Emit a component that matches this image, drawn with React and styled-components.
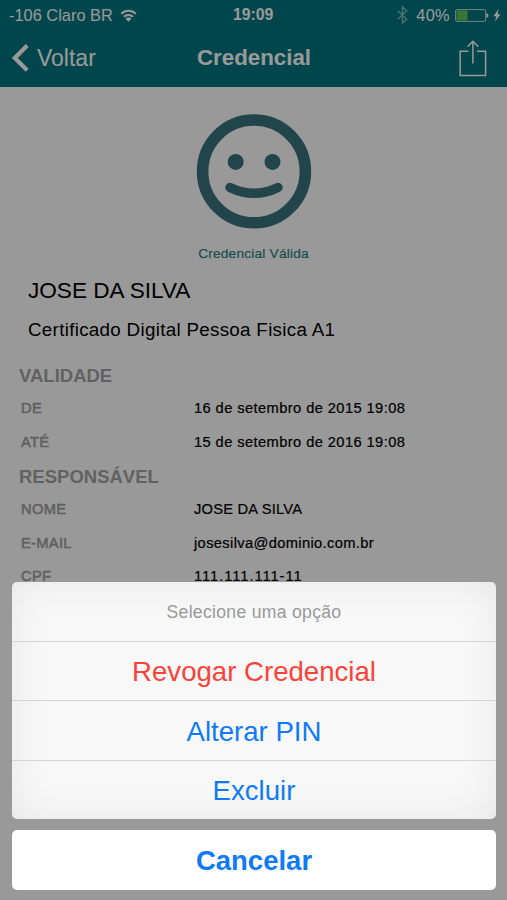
import React from 'react';
import styled, {createGlobalStyle} from 'styled-components';

const validity = [
  {label: 'DE', value: '16 de setembro de 2015 19:08', spacing: 0.4},
  {label: 'ATÉ', value: '15 de setembro de 2016 19:08', spacing: 0.4},
];

const owner = [
  {label: 'NOME', value: 'JOSE DA SILVA', spacing: 0.2},
  {label: 'E-MAIL', value: 'josesilva@dominio.com.br', spacing: 0.35},
  {label: 'CPF', value: '111.111.111-11', spacing: 0.95},
];

function WifiIcon() {
  return (
    <svg width="17" height="13" viewBox="0 0 18 14" fill="none">
      <path d="M1.2 5.2a11 11 0 0 1 15.6 0" stroke="#fff" strokeWidth="2.1" />
      <path d="M4.1 8.3a7.2 7.2 0 0 1 9.8 0" stroke="#fff" strokeWidth="2.1" />
      <path d="M9 13.6 5.7 10.5a4.5 4.5 0 0 1 6.6 0Z" fill="#fff" />
    </svg>
  );
}

function BluetoothIcon() {
  return (
    <svg width="11" height="18" viewBox="0 0 11 18" fill="none">
      <path
        d="M.8 4.8l9 8.4-4.3 3.9V.9l4.3 3.9-9 8.4"
        stroke="#fff"
        strokeOpacity="0.5"
        strokeWidth="1.4"
      />
    </svg>
  );
}

function BatteryIcon() {
  return (
    <svg width="34" height="13" viewBox="0 0 34 13">
      <rect x="0.6" y="0.6" width="30" height="11.8" rx="1.4" fill="none" stroke="#fff" strokeOpacity="0.75" />
      <rect x="1.5" y="1.5" width="11" height="10" fill="#5fc45a" />
      <path d="M31.4 4.2c2.7.5 2.7 4.1 0 4.6Z" fill="#fff" />
    </svg>
  );
}

function BoltIcon() {
  return (
    <svg width="8" height="13" viewBox="0 0 8 13">
      <path d="M5.6 0 .4 7.2h2.9L2 12.6l5.6-7.4H4.7Z" fill="#fff" />
    </svg>
  );
}

function BackIcon() {
  return (
    <svg width="18" height="28" viewBox="0 0 18 28" fill="none">
      <path d="M16.2 1.6 3.8 14l12.4 12.2" stroke="#fff" strokeWidth="4.2" />
    </svg>
  );
}

function ShareIcon() {
  return (
    <svg width="28" height="37" viewBox="0 0 28 37" fill="none" stroke="#fff" strokeWidth="1.5">
      <path d="M9.5 11.2H1.2v24.3h25.4V11.2H17.9" />
      <path d="M13.9 23.6V1.6M8.5 6.7l5.4-5.4 5.4 5.4" />
    </svg>
  );
}

function SmileIcon() {
  return (
    <svg width="116" height="116" viewBox="0 0 116 116">
      <circle cx="58" cy="57.4" r="51.4" fill="none" stroke="#37737d" strokeWidth="11.6" />
      <circle cx="39.7" cy="47.9" r="8" fill="#37737d" />
      <circle cx="76.5" cy="47.9" r="8" fill="#37737d" />
      <path
        d="M34 73.5q24 11.6 48 0"
        fill="none"
        stroke="#37737d"
        strokeWidth="9.4"
        strokeLinecap="round"
      />
    </svg>
  );
}

export default function App() {
  return (
    <Screen>
      <GlobalStyle />
      <Header>
        <StatusBar>
          <StatusSide>
            <span>-106 Claro BR</span>
            <WifiIcon />
          </StatusSide>
          <Clock>19:09</Clock>
          <StatusSide $end>
            <BluetoothIcon />
            <Percent>40%</Percent>
            <BatteryIcon />
            <BoltIcon />
          </StatusSide>
        </StatusBar>
        <NavBar>
          <BackButton>
            <BackIcon />
            Voltar
          </BackButton>
          <Title>Credencial</Title>
          <ShareButton aria-label="Compartilhar">
            <ShareIcon />
          </ShareButton>
        </NavBar>
      </Header>

      <Status>
        <SmileIcon />
        <StatusText>Credencial Válida</StatusText>
      </Status>
      <Name>JOSE DA SILVA</Name>
      <Kind>Certificado Digital Pessoa Fisica A1</Kind>

      <Section title="VALIDADE" rows={validity} />
      <Section title="RESPONSÁVEL" rows={owner} />

      <Backdrop>
        <Sheet>
          <SheetTitle>Selecione uma opção</SheetTitle>
          <SheetButton $danger>Revogar Credencial</SheetButton>
          <SheetButton>Alterar PIN</SheetButton>
          <SheetButton>Excluir</SheetButton>
        </Sheet>
        <CancelButton>Cancelar</CancelButton>
      </Backdrop>
    </Screen>
  );
}

function Section({title, rows}) {
  return (
    <section>
      <SectionTitle>{title}</SectionTitle>
      {rows.map((row) => (
        <Row key={row.label}>
          <Label>{row.label}</Label>
          <Value $spacing={row.spacing}>{row.value}</Value>
        </Row>
      ))}
    </section>
  );
}

const GlobalStyle = createGlobalStyle`
  * {
    box-sizing: border-box;
  }
  body {
    margin: 0;
    font-family: 'Liberation Sans', Arial, sans-serif;
  }
  button {
    font-family: inherit;
    border: none;
    background: none;
    padding: 0;
  }
  svg {
    display: block;
    flex: none;
  }
`;

const Screen = styled.div`
  position: relative;
  width: 507px;
  height: 900px;
  overflow: hidden;
  background-color: #fff;
  color: #000;
  white-space: nowrap;
`;

const Header = styled.header`
  height: 87px;
  background-color: #02767f;
  color: #fff;
`;

const StatusBar = styled.div`
  display: grid;
  grid-template-columns: 224px 1fr 1fr;
  align-items: center;
  height: 29px;
  padding: 1px 6px 0 9px;
  font-size: 16.4px;
`;

const StatusSide = styled.div`
  display: flex;
  align-items: center;
  justify-content: ${(props) => (props.$end ? 'flex-end' : 'flex-start')};
  gap: ${(props) => (props.$end ? '4px' : '7px')};
`;

const Clock = styled.span`
  font-size: 15.8px;
  font-weight: bold;
`;

const Percent = styled.span`
  margin: 0 1px 0 4px;
  letter-spacing: 0.3px;
`;

const NavBar = styled.nav`
  display: grid;
  grid-template-columns: 186px 1fr auto;
  align-items: center;
  height: 58px;
  padding: 0 20px 0 11px;
`;

const BackButton = styled.button`
  display: flex;
  align-items: center;
  gap: 8px;
  color: #fff;
  font-size: 23px;
`;

const Title = styled.h1`
  margin: 0;
  font-size: 22.3px;
  font-weight: bold;
`;

const ShareButton = styled.button`
  justify-self: end;
`;

const Status = styled.div`
  display: flex;
  flex-direction: column;
  align-items: center;
  padding-top: 27px;
`;

const StatusText = styled.span`
  margin-top: 16px;
  line-height: 16px;
  font-size: 13.7px;
  letter-spacing: 0.2px;
  color: #2a8388;
  -webkit-text-stroke: 0.2px #2a8388;
`;

const Name = styled.h2`
  margin: 14px 0 0 28px;
  line-height: 30px;
  font-size: 22.6px;
  font-weight: normal;
`;

const Kind = styled.p`
  margin: 12px 0 17px 28px;
  line-height: 24px;
  font-size: 18.8px;
  letter-spacing: 0.3px;
`;

const SectionTitle = styled.h3`
  margin: 0;
  padding-left: 19px;
  line-height: 33.4px;
  font-size: 18.5px;
  font-weight: bold;
  color: #a3a3a3;
`;

const Row = styled.div`
  display: grid;
  grid-template-columns: 173px 1fr;
  padding-left: 21px;
  line-height: 33.6px;
  font-size: 14.7px;
`;

const Label = styled.span`
  letter-spacing: 0.3px;
  color: #a0a0a0;
  -webkit-text-stroke: 0.5px #a0a0a0;
`;

const Value = styled.span`
  letter-spacing: ${(props) => props.$spacing}px;
  -webkit-text-stroke: 0.2px #000;
`;

const Backdrop = styled.div`
  position: absolute;
  inset: 0;
  display: flex;
  flex-direction: column;
  justify-content: flex-end;
  gap: 10.5px;
  padding: 0 11px 10.5px 12px;
  background-color: rgba(0, 0, 0, 0.4);
`;

const Sheet = styled.div`
  display: flex;
  flex-direction: column;
  border-radius: 5px;
  background-color: #f8f8f8;
  box-shadow: inset 0 0 42px rgba(0, 0, 0, 0.07);
`;

const SheetTitle = styled.div`
  height: 59px;
  line-height: 60px;
  text-align: center;
  font-size: 17.6px;
  letter-spacing: 0.3px;
  color: #999;
`;

const SheetButton = styled.button`
  height: 59.5px;
  padding-top: 3px;
  border-top: 1px solid #d5d5d6;
  font-size: 27.6px;
  color: ${(props) => (props.$danger ? '#fb4238' : '#0f7af8')};
`;

const CancelButton = styled.button`
  height: 60px;
  padding-top: 2px;
  border-radius: 5px;
  background-color: #fff;
  font-size: 27.5px;
  font-weight: bold;
  color: #0f7af8;
`;
